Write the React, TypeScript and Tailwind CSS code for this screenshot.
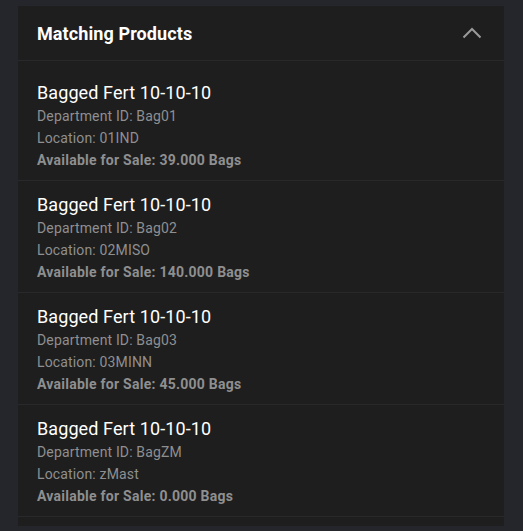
import React from "react";

const items = [
  { dept: "Bag01", loc: "01IND", avail: "39.000" },
  { dept: "Bag02", loc: "02MISO", avail: "140.000" },
  { dept: "Bag03", loc: "03MINN", avail: "45.000" },
  { dept: "BagZM", loc: "zMast", avail: "0.000" },
];

export default function App() {
  return (
    <div
      className="w-[523px] h-[531px] bg-[#25262b] pt-[6px] px-[18px] overflow-hidden"
      style={{ fontFamily: "Roboto, 'Noto Sans', sans-serif" }}
    >
      <div className="bg-[#1e1e1f] w-[486px] h-[520px]">
        <div className="h-[55px] flex items-center justify-between pl-[19px] pr-[22px] border-b border-[#29292b]">
          <span className="text-white text-[18px] font-bold tracking-[0.1px]">Matching Products</span>
          <svg width="20" height="12" viewBox="0 0 20 12" fill="none">
            <path d="M1.5 10.5 L10 2 L18.5 10.5" stroke="#9a9a9a" strokeWidth="2" />
          </svg>
        </div>
        <div className="py-2">
          {items.map((it) => (
            <div key={it.dept} className="pl-[19px] pt-3 pb-[9px] border-b border-[#29292b]">
              <div className="text-white text-[18px] leading-[24px] tracking-[0.1px]">Bagged Fert 10-10-10</div>
              <div className="text-[#8f8f8f] text-[14px] leading-[22px] tracking-[0.15px]">Department ID: {it.dept}</div>
              <div className="text-[#8f8f8f] text-[14px] leading-[22px] tracking-[0.15px]">Location: {it.loc}</div>
              <div className="text-[#8f8f8f] text-[14px] leading-[22px] font-bold tracking-[0.25px]">
                Available for Sale: {it.avail} Bags
              </div>
            </div>
          ))}
        </div>
      </div>
    </div>
  );
}
